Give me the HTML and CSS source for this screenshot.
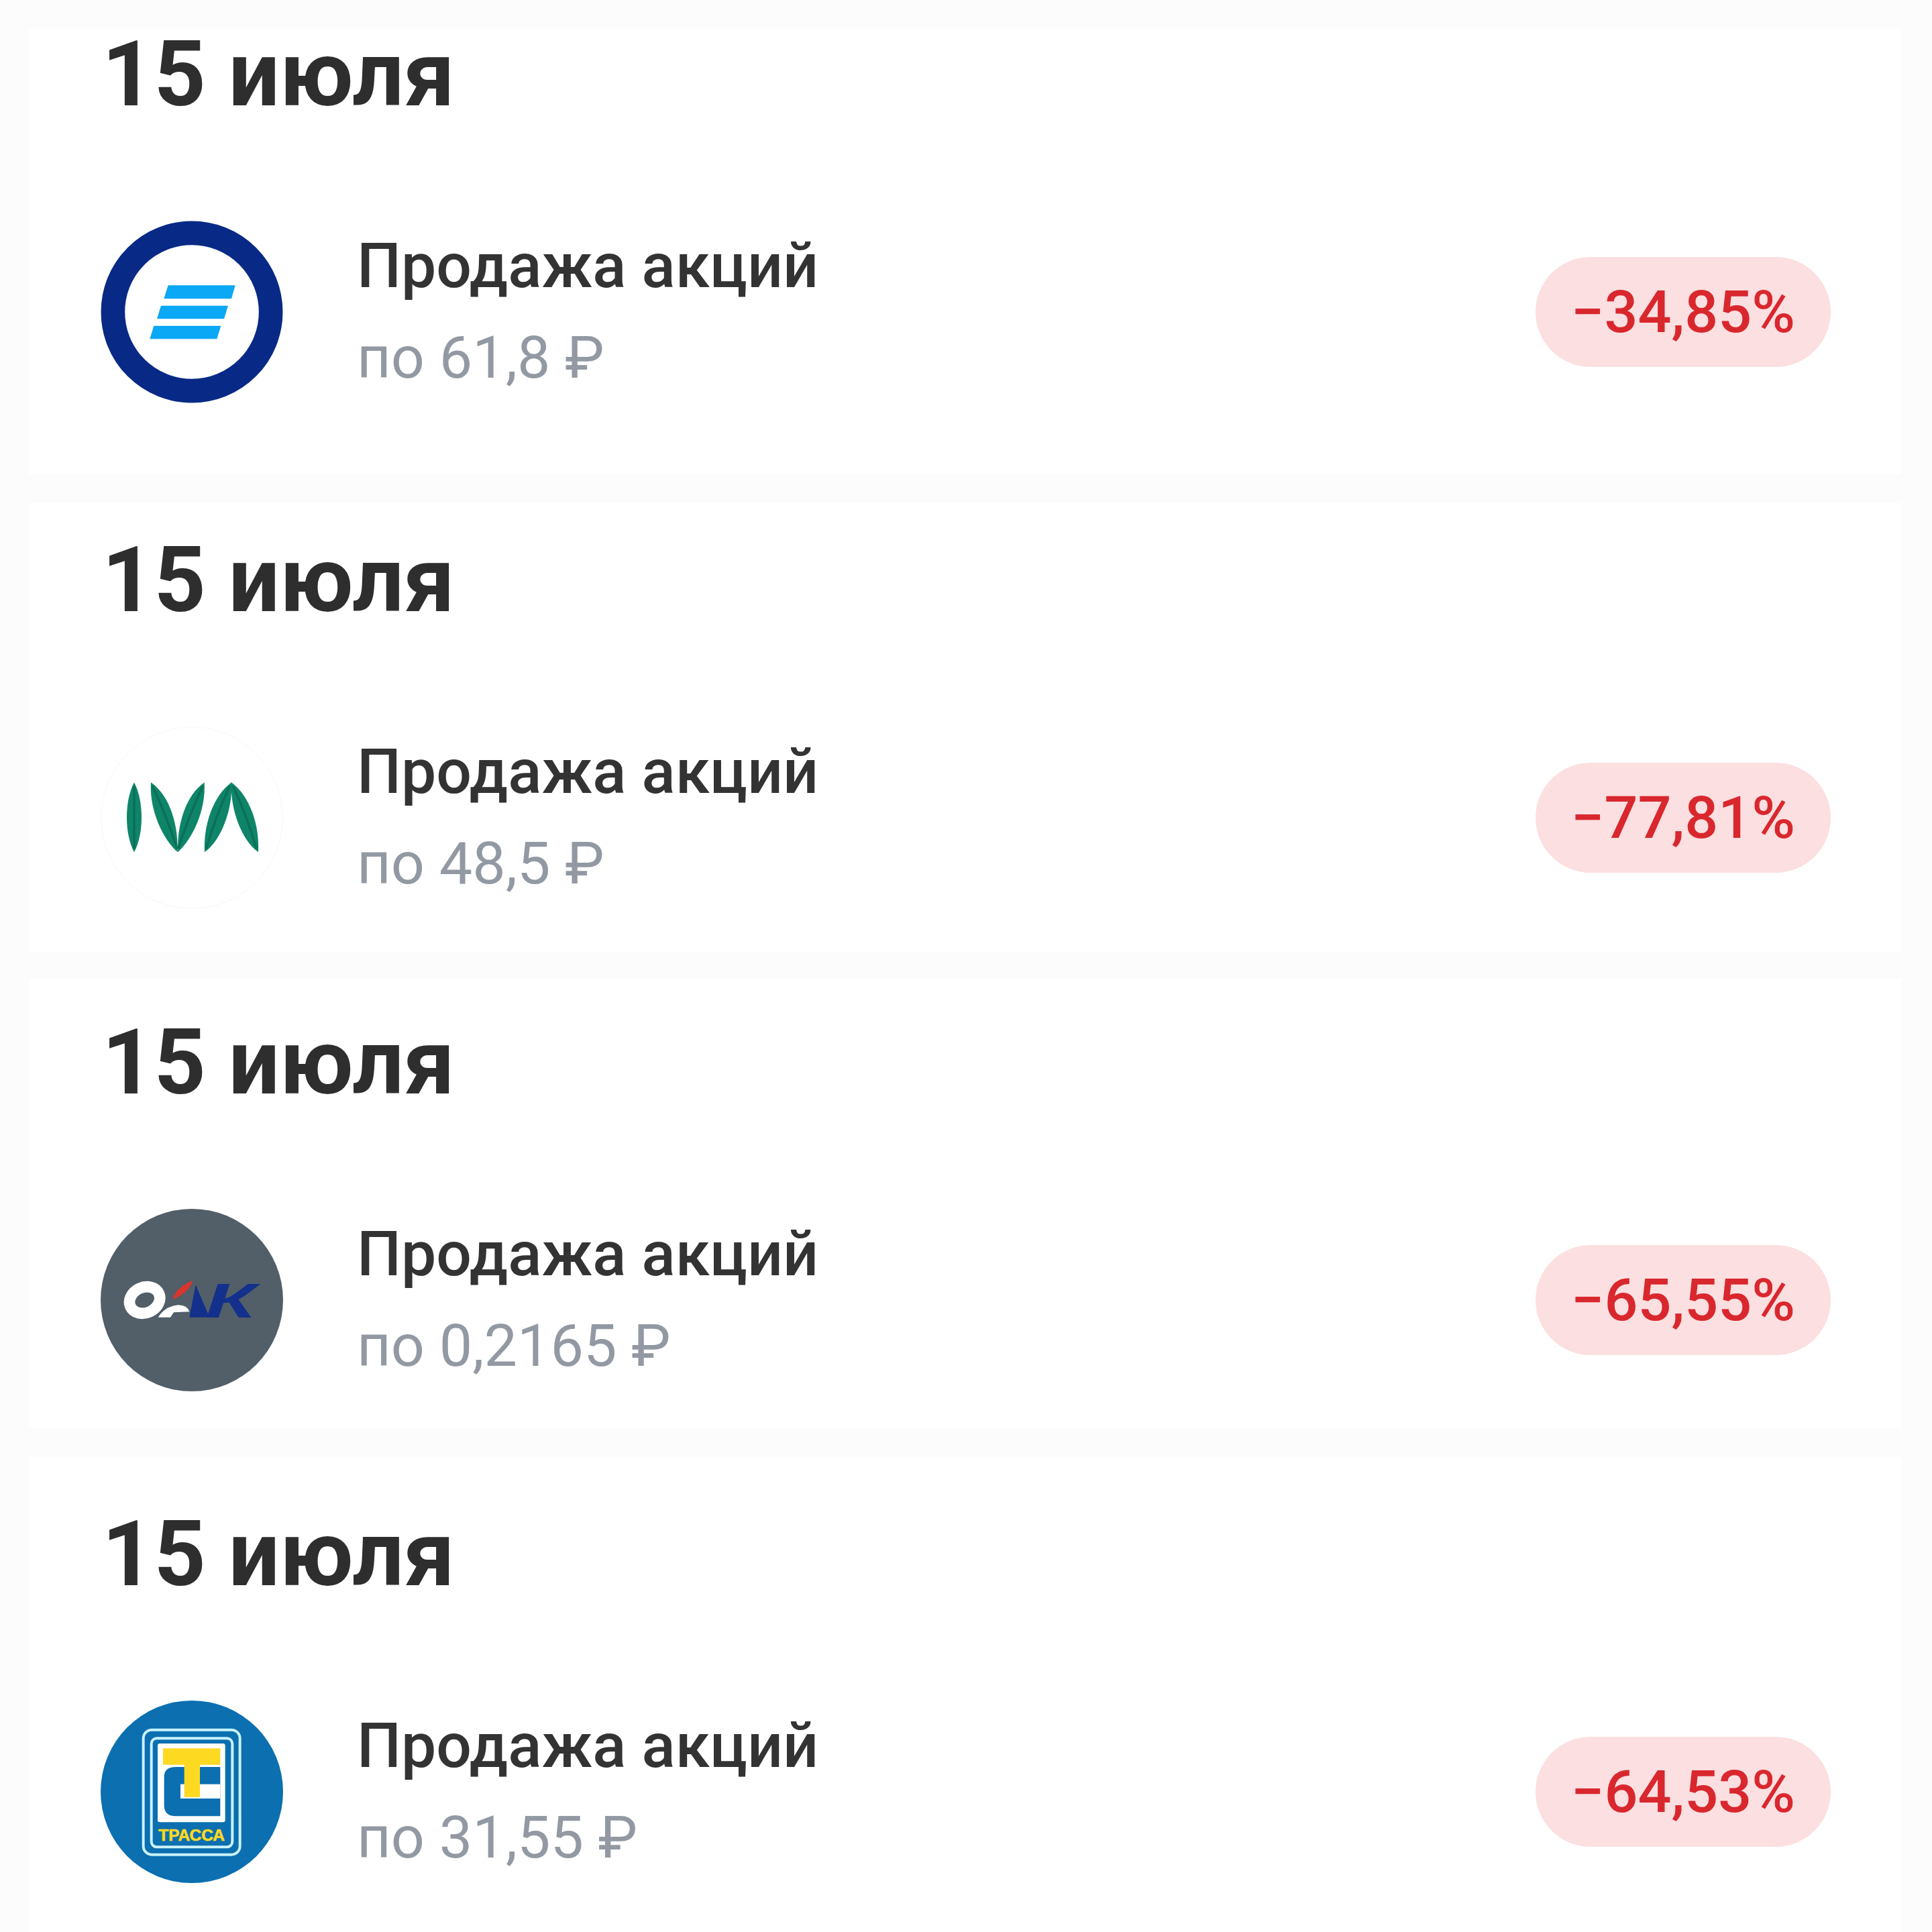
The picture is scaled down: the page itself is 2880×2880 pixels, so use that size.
FILE: index.html
```html
<!DOCTYPE html>
<html lang="ru">
<head>
    <meta charset="UTF-8">
    <title>Операции</title>
    <link rel="stylesheet" href="styles.css">
</head>
<body>
    <div class="list">
        <section class="card card-first">
            <h2 class="date">15 июля</h2>
            <div class="row">
                <svg class="logo" viewBox="150 148 816 816">
                    <circle cx="558" cy="556" r="353" fill="#fff" stroke="#082a86" stroke-width="107"/>
                    <polygon fill="#0aa8f5" points="452,437 752,437 735,497 433,497"/>
                    <polygon fill="#0aa8f5" points="420,528 720,528 702,587 402,587"/>
                    <polygon fill="#0aa8f5" points="388,618 688,618 670,677 370,677"/>
                </svg>
                <div class="info">
                    <div class="title">Продажа акций</div>
                    <div class="price">по 61,8 ₽</div>
                </div>
                <div class="pill">−34,85%</div>
            </div>
        </section>
        <section class="card card-second">
            <h2 class="date">15 июля</h2>
            <div class="row">
                <svg class="logo" viewBox="153 128 816 816">
                    <circle cx="561" cy="536" r="406" fill="#fff" stroke="#f2f2f0" stroke-width="2"/>
                    <g fill="#0e8468">
                        <path d="M303 378C347 460 347 610 303 690C259 610 259 460 303 378Z"/>
                        <path d="M378 378C465 440 500 570 497 690C430 630 370 500 378 378Z"/>
                        <path d="M617 378C530 440 495 570 498 690C565 630 625 500 617 378Z"/>
                        <path d="M738 378C655 440 612 570 618 690C690 640 745 500 738 378Z"/>
                        <path d="M738 378C821 440 864 570 858 690C786 640 731 500 738 378Z"/>
                    </g>
                    <g fill="none" stroke="#0b6f58" stroke-width="10">
                        <path d="M303 395V675"/>
                        <path d="M385 395Q445 520 495 675"/>
                        <path d="M610 395Q550 520 500 675"/>
                        <path d="M730 395Q670 520 625 675"/>
                        <path d="M745 395Q805 520 850 675"/>
                    </g>
                </svg>
                <div class="info">
                    <div class="title">Продажа акций</div>
                    <div class="price">по 48,5 ₽</div>
                </div>
                <div class="pill">−77,81%</div>
            </div>
        </section>
        <section class="card card-third">
            <h2 class="date">15 июля</h2>
            <div class="row">
                <svg class="logo" viewBox="153 125 816 816">
                    <circle cx="561" cy="533" r="408" fill="#525e68"/>
                    <ellipse cx="350" cy="533" rx="70" ry="57" fill="none" stroke="#fff" stroke-width="50" transform="rotate(-25 350 533)"/>
                    <path fill="#fff" d="M410 610Q440 560 500 555Q540 555 550 585L480 588L465 610Z"/>
                    <path fill="#d8352d" d="M565 445Q550 500 475 530Q490 475 565 445Z"/>
                    <polygon fill="#12308c" points="578,465 640,610 550,610"/>
                    <text class="logo-k" x="622" y="610" textLength="225" lengthAdjust="spacingAndGlyphs">К</text>
                </svg>
                <div class="info">
                    <div class="title">Продажа акций</div>
                    <div class="price">по 0,2165 ₽</div>
                </div>
                <div class="pill">−65,55%</div>
            </div>
        </section>
        <section class="card card-fourth">
            <h2 class="date">15 июля</h2>
            <div class="row">
                <svg class="logo" viewBox="153 108 816 816">
                    <circle cx="561" cy="516" r="408" fill="#0b6fb0"/>
                    <rect x="344" y="239" width="432" height="558" rx="38" fill="none" stroke="#c9f2ff" stroke-width="12"/>
                    <rect x="380" y="277" width="362" height="486" rx="24" fill="none" stroke="#c9f2ff" stroke-width="12"/>
                    <rect x="408" y="300" width="302" height="352" rx="10" fill="#fff"/>
                    <path fill="#0b6fb0" d="M688 405V625H490Q437 625 437 575V450Q437 405 490 405Z"/>
                    <rect x="510" y="482" width="178" height="64" fill="#fff"/>
                    <path fill="#fdd922" d="M432 322H688V395H597V540H527V395H432Z"/>
                    <text class="logo-name" x="412" y="736" textLength="296" lengthAdjust="spacingAndGlyphs">ТРАССА</text>
                </svg>
                <div class="info">
                    <div class="title">Продажа акций</div>
                    <div class="price">по 31,55 ₽</div>
                </div>
                <div class="pill">−64,53%</div>
            </div>
        </section>
    </div>
</body>
</html>
```

FILE: styles.css
```css
body {
    margin: 0;
    background-color: #fcfcfc;
    font-family: Roboto, "Liberation Sans", sans-serif;
}
.list {
    height: 2880px;
    overflow: hidden;
    padding: 43px 45px 0 43px;
    box-sizing: border-box;
}
.card {
    background-color: #ffffff;
    padding-left: 107px;
    padding-right: 106px;
    box-sizing: border-box;
}
.card-first { height: 664px; margin-bottom: 43px; }
.card-second { height: 670px; margin-bottom: 39px; padding-top: 47px; }
.card-third { height: 670px; margin-bottom: 43px; padding-top: 57px; }
.card-fourth { height: 708px; padding-top: 77px; }
.date {
    margin: 0;
    padding-left: 2px;
    font-size: 135px;
    line-height: 137px;
    font-weight: 700;
    color: #2e2e2e;
}
.row {
    display: flex;
    align-items: center;
    margin-top: 149px;
}
.logo {
    width: 272px;
    height: 272px;
    flex: none;
}
.info {
    margin-left: 110px;
    flex: 1;
}
.title {
    font-size: 93px;
    line-height: 120px;
    font-weight: 500;
    color: #333333;
}
.price {
    margin-top: 16px;
    font-size: 88px;
    line-height: 120px;
    color: #9299a2;
}
.pill {
    background-color: #fcdfe0;
    color: #d9272e;
    font-size: 88px;
    line-height: 164px;
    font-weight: 500;
    padding: 0 53px;
    border-radius: 82px;
}
.logo-k {
    font-family: "Liberation Sans", sans-serif;
    font-size: 216px;
    font-weight: 700;
    font-style: italic;
    fill: #12308c;
}
.logo-name {
    font-family: "Liberation Sans", sans-serif;
    font-size: 70px;
    font-weight: 700;
    fill: #fdd922;
    stroke: #fdd922;
    stroke-width: 2px;
}
```
